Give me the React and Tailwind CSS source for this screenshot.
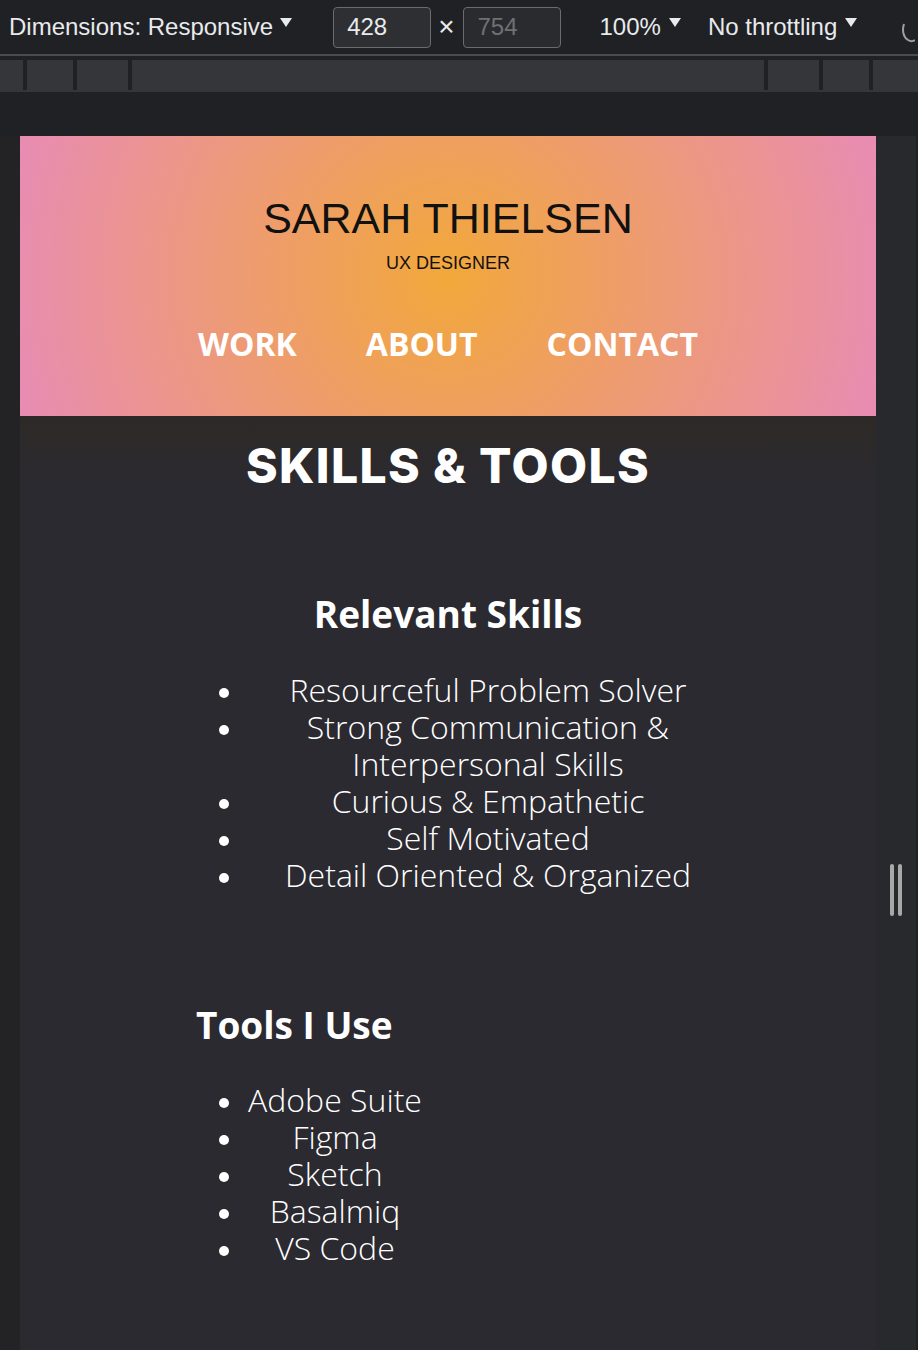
import React from 'react'

const skills = [
  'Resourceful Problem Solver',
  'Strong Communication & Interpersonal Skills',
  'Curious & Empathetic',
  'Self Motivated',
  'Detail Oriented & Organized',
]

const tools = ['Adobe Suite', 'Figma', 'Sketch', 'Basalmiq', 'VS Code']

function Caret({ className }) {
  return (
    <svg width="12" height="10" viewBox="0 0 12 10" className={className}>
      <polygon points="0,0 12,0 6,9" fill="#e8eaed" />
    </svg>
  )
}

function Bullets({ items, width }) {
  return (
    <ul className="flex flex-col">
      {items.map(t => (
        <li key={t} className="flex">
          <span className="ml-[199px] w-[29px] shrink-0">
            <span className="block mt-[17px] w-[10px] h-[10px] rounded-full bg-white" />
          </span>
          <span className={`${width} text-center`}>{t}</span>
        </li>
      ))}
    </ul>
  )
}

export default function App() {
  return (
    <div className="h-[1350px] w-[918px] overflow-hidden bg-[#202124] font-['Liberation_Sans',Arial,sans-serif]">
      {/* device toolbar */}
      <div className="h-[54px] flex items-center text-[24px] text-[#e8eaed] whitespace-nowrap">
        <span className="ml-[9px]">Dimensions: Responsive</span>
        <Caret className="ml-[7px] mb-[8px]" />
        <div className="ml-[41px] w-[98px] h-[41px] rounded-[4px] border border-[#6a6b6e] bg-[#2e2f32] flex items-center pl-[13px]">428</div>
        <span className="ml-[7px] text-[28px] leading-none">×</span>
        <div className="ml-[9px] w-[98px] h-[41px] rounded-[4px] border border-[#6a6b6e] bg-[#2a2b2e] flex items-center pl-[13px] text-[#6f7074]">754</div>
        <span className="ml-[38px]">100%</span>
        <Caret className="ml-[8px] mb-[8px]" />
        <span className="ml-[27px]">No throttling</span>
        <Caret className="ml-[8px] mb-[8px]" />
        <svg width="14" height="24" viewBox="0 0 14 24" className="ml-[44px] mt-[10px]">
          <path d="M3 4 C1 10 2 17 7 20 C10 22 13 21 14 20" fill="none" stroke="#9aa0a6" strokeWidth="2" />
        </svg>
      </div>
      <div className="h-[2px] bg-[#4a4b4e]" />
      <div className="mt-[4px] h-[32px] bg-[#35363a] flex">
        <div className="w-[23px]" />
        <div className="w-[4px] h-[30px] bg-[#202124]" />
        <div className="w-[46px]" />
        <div className="w-[4px] h-[30px] bg-[#202124]" />
        <div className="w-[51px]" />
        <div className="w-[4px] h-[30px] bg-[#202124]" />
        <div className="w-[632px]" />
        <div className="w-[4px] h-[30px] bg-[#202124]" />
        <div className="w-[51px]" />
        <div className="w-[4px] h-[30px] bg-[#202124]" />
        <div className="w-[46px]" />
        <div className="w-[4px] h-[30px] bg-[#202124]" />
      </div>
      <div className="h-[44px]" />

      <div className="flex h-[1508px]">
        <div className="w-[20px] bg-[#232326]" />

        <div className="w-[856px] flex flex-col">
          <header className="h-[280px] pt-[58px] flex flex-col items-center bg-[radial-gradient(circle,#f2a83a_0%,#e88cb4_100%)]">
            <h1 className="text-[43px] leading-[48px] text-[#111]">SARAH THIELSEN</h1>
            <p className="mt-[11px] text-[18px] leading-[20px] text-[#111]">UX DESIGNER</p>
            <nav className="mt-[51px] flex justify-center gap-[69px] text-[32px] leading-[40px] font-bold text-white font-['Open_Sans',sans-serif]">
              <a>WORK</a>
              <a>ABOUT</a>
              <a>CONTACT</a>
            </nav>
          </header>

          <main className="flex-1 bg-[linear-gradient(to_bottom,#2d2926,#2b2a30_70px)] text-white font-['Open_Sans',sans-serif]">
            <h2 className="mt-[22px] text-center text-[48px] leading-[56px] font-extrabold tracking-[1.4px] font-['Inter',sans-serif]">SKILLS &amp; TOOLS</h2>

            <h3 className="mt-[100px] text-center text-[37px] leading-[40px] font-bold">Relevant Skills</h3>
            <div className="mt-[37px] text-[32px] leading-[37px] font-light">
              <Bullets items={skills} width="w-[480px]" />
            </div>

            <h3 className="mt-[112px] ml-[176px] text-[37px] leading-[40px] font-bold">Tools I Use</h3>
            <div className="mt-[36px] text-[32px] leading-[37px] font-light">
              <Bullets items={tools} width="w-[174px]" />
            </div>
          </main>
        </div>

        <div className="w-[40px] bg-[#28292d] flex items-center justify-center gap-[4px]">
          <div className="w-[4px] h-[52px] rounded-full bg-[#a9a9a9]" />
          <div className="w-[4px] h-[52px] rounded-full bg-[#a9a9a9]" />
        </div>
      </div>
    </div>
  )
}
